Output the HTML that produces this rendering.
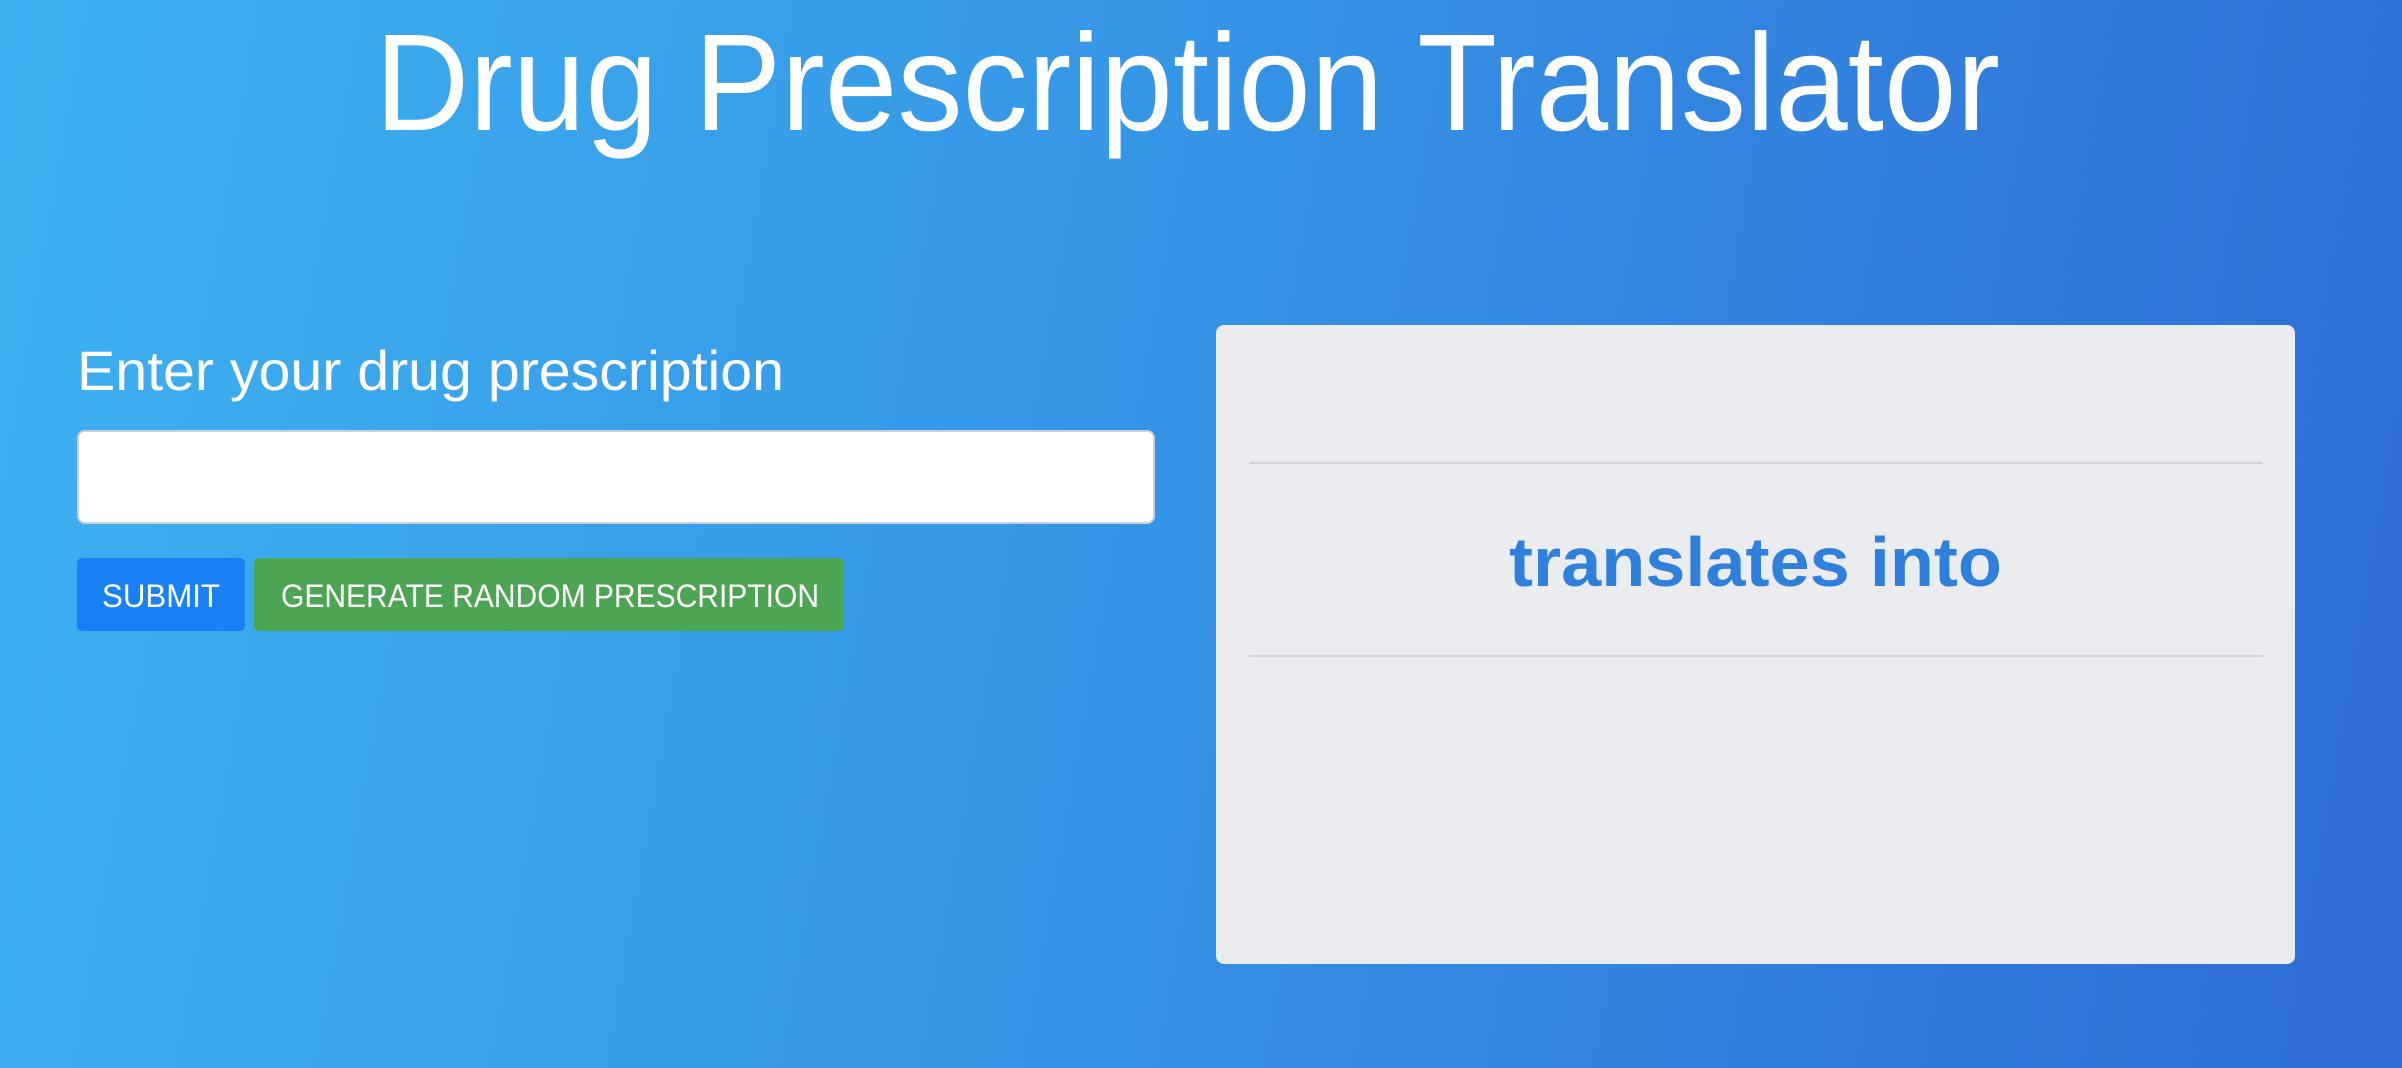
<!DOCTYPE html>
<html><head><style>
html,body{margin:0;padding:0;width:2402px;height:1068px;overflow:hidden;}
body{background:linear-gradient(100deg,#3eb1f1 0%,#3596e6 45%,#2e6bd5 100%);position:relative;font-family:"Liberation Sans",sans-serif;}
.abs{position:absolute;}
.input{left:77px;top:430px;width:1078px;height:94px;background:#fff;border:2px solid #c9d0d8;border-radius:8px;box-sizing:border-box;}
.btn{top:558px;height:73px;border-radius:5px;}
.card{left:1216px;top:325px;width:1079px;height:639px;background:#ebecf0;border-radius:8px;}
.hr{left:1249px;width:1014px;height:2px;background:#d2d4da;}
svg{position:absolute;left:0;top:0;}
</style></head><body>
<div class="abs input"></div>
<div class="abs btn" style="left:77px;width:168px;background:#1a80f5;"></div>
<div class="abs btn" style="left:254px;width:590px;background:#4ca553;"></div>
<div class="abs card"></div>
<div class="abs hr" style="top:462px"></div>
<div class="abs hr" style="top:655px"></div>
<svg width="2402" height="1068" font-family="Liberation Sans, sans-serif">
<text x="375" y="130" font-size="138" fill="#fff" textLength="1625" lengthAdjust="spacingAndGlyphs">Drug Prescription Translator</text>
<text x="77" y="390" font-size="56" fill="#fff" textLength="707" lengthAdjust="spacingAndGlyphs">Enter your drug prescription</text>
<text x="102" y="607" font-size="32" fill="#fff" textLength="118" lengthAdjust="spacingAndGlyphs">SUBMIT</text>
<text x="281" y="607" font-size="32" fill="#fff" textLength="538" lengthAdjust="spacingAndGlyphs">GENERATE RANDOM PRESCRIPTION</text>
<text x="1509" y="586" font-size="70" font-weight="bold" fill="#2f80dc" textLength="493" lengthAdjust="spacingAndGlyphs">translates into</text>
</svg>
</body></html>
